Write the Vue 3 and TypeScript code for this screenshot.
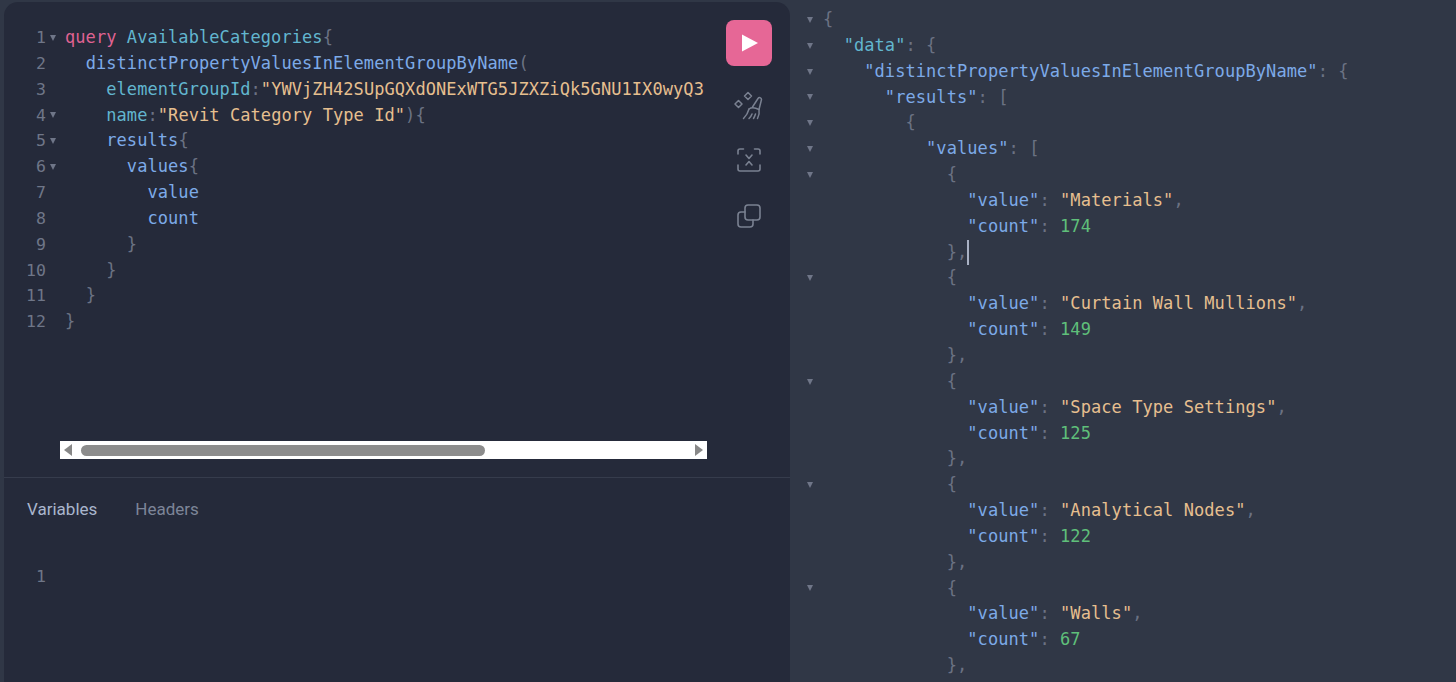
<script setup lang="ts">
type Tok = [string, string]
interface Line { fold: boolean; toks: Tok[]; caret?: boolean }

const q: Line[] = [
  { fold: true, toks: [['kw', 'query'], ['', ' '], ['def', 'AvailableCategories'], ['pn', '{']] },
  { fold: false, toks: [['', '  '], ['fld', 'distinctPropertyValuesInElementGroupByName'], ['pn', '(']] },
  { fold: false, toks: [['', '    '], ['arg', 'elementGroupId'], ['pn', ':'], ['str', '"YWVjZH42SUpGQXdONExWTG5JZXZiQk5GNU1IX0wyQ3']] },
  { fold: true, toks: [['', '    '], ['arg', 'name'], ['pn', ':'], ['str', '"Revit Category Type Id"'], ['pn', '){']] },
  { fold: true, toks: [['', '    '], ['fld', 'results'], ['pn', '{']] },
  { fold: true, toks: [['', '      '], ['fld', 'values'], ['pn', '{']] },
  { fold: false, toks: [['', '        '], ['fld', 'value']] },
  { fold: false, toks: [['', '        '], ['fld', 'count']] },
  { fold: false, toks: [['', '      '], ['pn', '}']] },
  { fold: false, toks: [['', '    '], ['pn', '}']] },
  { fold: false, toks: [['', '  '], ['pn', '}']] },
  { fold: false, toks: [['pn', '}']] },
]

const pad = (n: number): string => ' '.repeat(n)
const head = (n: number, key: string, open: string, cls = 'fld'): Line => ({
  fold: true,
  toks: [['', pad(n)], [cls, `"${key}"`], ['pn', ': ' + open]],
})
const r: Line[] = [
  { fold: true, toks: [['pn', '{']] },
  head(2, 'data', '{', 'arg'),
  head(4, 'distinctPropertyValuesInElementGroupByName', '{'),
  head(6, 'results', '['),
  { fold: true, toks: [['', pad(8)], ['pn', '{']] },
  head(10, 'values', '['),
]
const items: [string, number][] = [
  ['Materials', 174],
  ['Curtain Wall Mullions', 149],
  ['Space Type Settings', 125],
  ['Analytical Nodes', 122],
  ['Walls', 67],
]
items.forEach(([name, n], i) => {
  r.push({ fold: true, toks: [['', pad(12)], ['pn', '{']] })
  r.push({ fold: false, toks: [['', pad(14)], ['fld', '"value"'], ['pn', ': '], ['str', `"${name}"`], ['pn', ',']] })
  r.push({ fold: false, toks: [['', pad(14)], ['fld', '"count"'], ['pn', ': '], ['int', String(n)]] })
  r.push({ fold: false, toks: [['', pad(12)], ['pn', '},']], caret: i === 0 })
})
</script>

<template>
  <main class="page">
    <section class="session">
      <div class="top">
        <div class="editor">
          <div v-for="(l, i) in q" :key="i" class="row">
            <span class="num">{{ i + 1 }}</span>
            <span class="foldcell"><i v-if="l.fold" class="fold"></i></span>
            <span class="code"><span v-for="(t, j) in l.toks" :key="j" :class="t[0]">{{ t[1] }}</span></span>
          </div>
          <div class="hscroll">
            <svg class="harrow" width="12" height="14" viewBox="0 0 12 14"><path d="M10 1v12L2 7z" fill="#888" /></svg>
            <span class="track"><span class="thumb"></span></span>
            <svg class="harrow" width="12" height="14" viewBox="0 0 12 14"><path d="M2 1v12l8-6z" fill="#888" /></svg>
          </div>
        </div>
        <aside class="tools">
          <button class="play" aria-label="Run">
            <svg width="18" height="18" viewBox="0 0 18 18"><path d="M1 0.500 17 9 1 17.500z" fill="#fff" /></svg>
          </button>
          <svg class="tool t1" width="30" height="30" viewBox="0 0 30 30" fill="none" stroke="#7a8191" stroke-width="1.5" stroke-linecap="round" stroke-linejoin="round">
            <path d="M14 2.500 17.500 6 14 9.500 10.500 6z" />
            <path d="M4.500 10.500 8 14l-3.500 3.500L1 14z" />
            <path d="M18.500 17 24 8.500c1-1.500 3.500-1 3.500 1L25 19.500" />
            <path d="M15 19c2-1.500 6-1.500 10 .5.500 2.500 0 6-1.500 9" />
            <path d="M15 19c-1 4-3 7-5.500 9.500" />
            <path d="M15 28.500c1.500-1.500 2.500-3 3-4.500M19.500 28.500c1-1.500 1.500-3 2-4.500" />
          </svg>
          <svg class="tool t2" width="24" height="24" viewBox="0 0 24 24" fill="none" stroke="#7a8191" stroke-width="1.6" stroke-linecap="round" stroke-linejoin="round">
            <path d="M1 6V3A2 2 0 0 1 3 1h3.500M17.500 1H21a2 2 0 0 1 2 2v3M1 17v4a2 2 0 0 0 2 2h18a2 2 0 0 0 2-2v-4" />
            <path d="M9 7l3 3.500L15 7M9 17l3-3.500 3 3.500" />
          </svg>
          <svg class="tool t3" width="24" height="24" viewBox="0 0 24 24" fill="none" stroke="#7a8191" stroke-width="1.6" stroke-linecap="round" stroke-linejoin="round">
            <rect x="8" y="1" width="15" height="15" rx="3" />
            <path d="M8 8H4a3 3 0 0 0-3 3v9a3 3 0 0 0 3 3h9a3 3 0 0 0 3-3v-4" />
          </svg>
        </aside>
      </div>
      <div class="bottom">
        <nav class="tabs">
          <span class="tab active">Variables</span>
          <span class="tab">Headers</span>
        </nav>
        <div class="row vars">
          <span class="num">1</span>
        </div>
      </div>
    </section>
    <section class="response">
      <div v-for="(l, i) in r" :key="i" class="row">
        <span class="foldcell"><i v-if="l.fold" class="fold"></i></span>
        <span class="code"><span v-for="(t, j) in l.toks" :key="j" :class="t[0]">{{ t[1] }}</span><i v-if="l.caret" class="caret"></i></span>
      </div>
    </section>
  </main>
</template>

<style>
html, body { margin: 0; background: #303746; }
</style>

<style scoped>
.page {
  display: flex;
  width: 1456px;
  height: 682px;
  overflow: hidden;
  background: #303746;
  font-family: "DejaVu Sans Mono", monospace;
  font-size: 17px;
  letter-spacing: 0.07px;
}
.session {
  width: 786px;
  margin: 2px 0 0 4px;
  flex: none;
  display: flex;
  flex-direction: column;
  background: #252a3a;
  border-radius: 14px 14px 0 0;
}
.top {
  height: 475px;
  flex: none;
  display: flex;
  border-bottom: 1px solid #363c4c;
}
.editor {
  position: relative;
  width: 703px;
  padding-top: 23px;
  overflow: hidden;
  flex: none;
}
.row {
  height: 25.85px;
  line-height: 25.85px;
  display: flex;
  white-space: pre;
}
.num {
  width: 42px;
  flex: none;
  text-align: right;
  color: #6f7688;
  font-size: 16.500px;
}
.foldcell {
  width: 19px;
  flex: none;
  display: flex;
  align-items: center;
  padding-left: 4px;
  box-sizing: border-box;
}
.fold {
  width: 0;
  height: 0;
  border-left: 3.500px solid transparent;
  border-right: 3.500px solid transparent;
  border-top: 6px solid #6f7688;
}
.code { white-space: pre; }
.kw { color: #df6291; }
.def { color: #62b6cf; }
.fld { color: #7daae8; }
.arg { color: #62b6cf; }
.str { color: #e6bf8f; }
.pn { color: #6b7283; }
.int { color: #5fbf7a; }
.hscroll {
  position: absolute;
  left: 56px;
  right: 0;
  top: 439px;
  height: 18px;
  box-sizing: border-box;
  background: #fff;
  display: flex;
  align-items: center;
  padding: 0 2px;
}
.harrow { flex: none; }
.track { flex: 1; padding: 0 7px; }
.thumb {
  display: block;
  width: 404px;
  height: 11px;
  border-radius: 6px;
  background: #8c8c8c;
}
.tools {
  flex: 1;
  display: flex;
  flex-direction: column;
  align-items: center;
  padding-top: 18px;
}
.play {
  width: 46px;
  height: 46px;
  padding: 0 0 0 3px;
  flex: none;
  border: 0;
  border-radius: 8px;
  background: #e66796;
  display: flex;
  align-items: center;
  justify-content: center;
}
.tool { flex: none; }
.t1 { margin-top: 24px; }
.t2 { margin-top: 28px; }
.t3 { margin-top: 32px; }
.bottom { flex: 1; }
.tabs {
  display: flex;
  gap: 38px;
  padding: 20px 0 0 23px;
  font-family: Roboto, sans-serif;
  font-size: 17px;
  line-height: 22px;
  letter-spacing: 0;
}
.tab { color: #7d8598; }
.tab.active { color: #aab6cd; }
.vars { margin-top: 44px; }
.response {
  flex: 1;
  padding: 7px 0 0 16px;
}
.response .foldcell { width: 17px; padding-left: 1px; }
.caret {
  display: inline-block;
  width: 2px;
  height: 25px;
  vertical-align: top;
  background: #a9b1c4;
}
</style>
